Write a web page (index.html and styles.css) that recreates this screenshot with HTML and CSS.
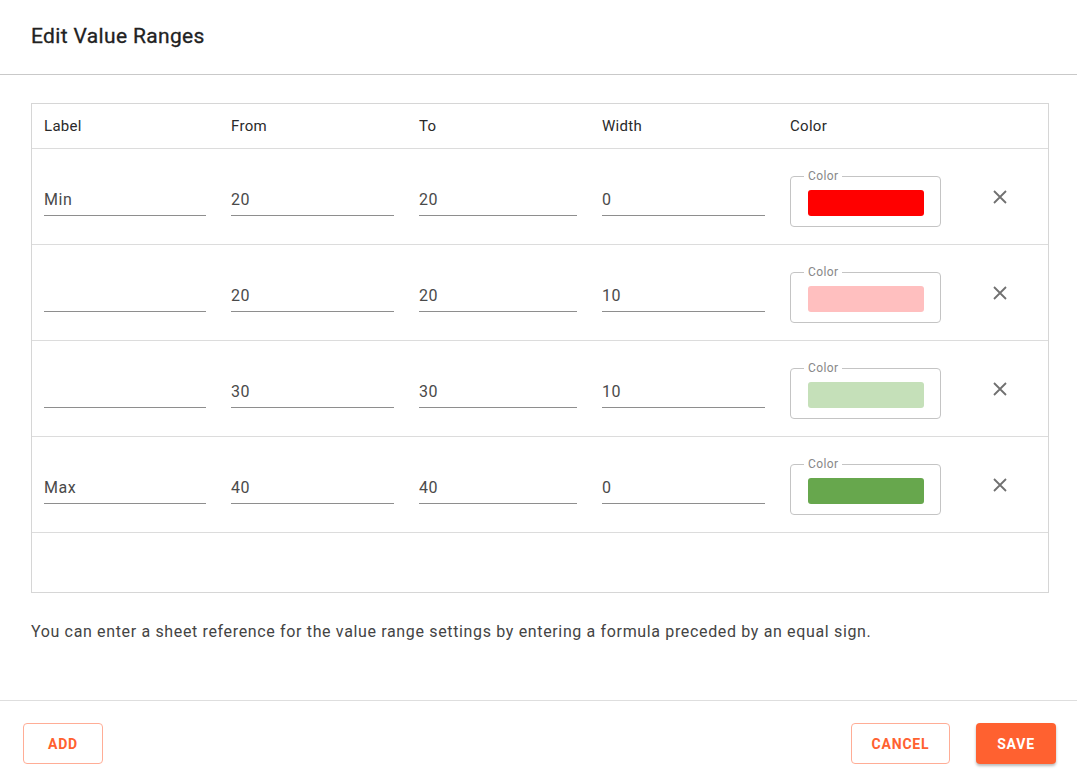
FILE: index.html
```html
<!DOCTYPE html>
<html>
<head>
<meta charset="utf-8">
<link rel="stylesheet" href="styles.css">
</head>
<body>
<div class="dialog">
  <header class="dialog-title">Edit Value Ranges</header>
  <main class="dialog-content">
    <div class="ranges">
      <div class="row head">
        <div class="cell">Label</div>
        <div class="cell">From</div>
        <div class="cell">To</div>
        <div class="cell">Width</div>
        <div class="cell">Color</div>
        <div class="cell"></div>
      </div>
      <div class="row">
        <div class="cell"><div class="input">Min</div></div>
        <div class="cell"><div class="input">20</div></div>
        <div class="cell"><div class="input">20</div></div>
        <div class="cell"><div class="input">0</div></div>
        <div class="cell"><div class="color-field"><span class="legend">Color</span><span class="swatch" style="background:#ff0000"></span></div></div>
        <div class="cell"><svg class="remove" viewBox="0 0 14 14"><path d="M1 1L13 13M13 1L1 13"/></svg></div>
      </div>
      <div class="row">
        <div class="cell"><div class="input"></div></div>
        <div class="cell"><div class="input">20</div></div>
        <div class="cell"><div class="input">20</div></div>
        <div class="cell"><div class="input">10</div></div>
        <div class="cell"><div class="color-field"><span class="legend">Color</span><span class="swatch" style="background:#ffbfbf"></span></div></div>
        <div class="cell"><svg class="remove" viewBox="0 0 14 14"><path d="M1 1L13 13M13 1L1 13"/></svg></div>
      </div>
      <div class="row">
        <div class="cell"><div class="input"></div></div>
        <div class="cell"><div class="input">30</div></div>
        <div class="cell"><div class="input">30</div></div>
        <div class="cell"><div class="input">10</div></div>
        <div class="cell"><div class="color-field"><span class="legend">Color</span><span class="swatch" style="background:#c5e0b9"></span></div></div>
        <div class="cell"><svg class="remove" viewBox="0 0 14 14"><path d="M1 1L13 13M13 1L1 13"/></svg></div>
      </div>
      <div class="row">
        <div class="cell"><div class="input">Max</div></div>
        <div class="cell"><div class="input">40</div></div>
        <div class="cell"><div class="input">40</div></div>
        <div class="cell"><div class="input">0</div></div>
        <div class="cell"><div class="color-field"><span class="legend">Color</span><span class="swatch" style="background:#67a74d"></span></div></div>
        <div class="cell"><svg class="remove" viewBox="0 0 14 14"><path d="M1 1L13 13M13 1L1 13"/></svg></div>
      </div>
      <div class="empty"></div>
    </div>
    <p class="note">You can enter a sheet reference for the value range settings by entering a formula preceded by an equal sign.</p>
  </main>
  <footer class="dialog-actions">
    <button class="btn outline">ADD</button>
    <div class="spacer"></div>
    <button class="btn outline cancel">CANCEL</button>
    <button class="btn filled">SAVE</button>
  </footer>
</div>
</body>
</html>
```
FILE: styles.css
```css
* { box-sizing: border-box; }
html, body { margin: 0; padding: 0; background: #fff; }
body {
  font-family: Roboto, "Liberation Sans", Arial, sans-serif;
  color: #333;
  width: 1077px;
  height: 782px;
  overflow: hidden;
}
.dialog { display: flex; flex-direction: column; height: 782px; }
.dialog-title {
  height: 75px;
  padding: 24px 31px 0;
  font-size: 21px;
  line-height: 24px;
  font-weight: 400;
  letter-spacing: 0.35px;
  color: #222;
  -webkit-text-stroke: 0.3px #222;
  border-bottom: 1px solid #c9c9c9;
}
.dialog-content {
  flex: 1;
  padding: 28px 28px 0 31px;
}
.ranges {
  width: 1018px;
  border: 1px solid #d6d6d6;
}
.row {
  display: grid;
  grid-template-columns: 187px 188px 183px 188px 188px 1fr;
  height: 96px;
  border-bottom: 1px solid #dcdcdc;
  align-items: start;
}
.row.head {
  height: 45px;
  align-items: center;
  font-size: 15px;
  font-weight: 400;
  letter-spacing: 0.3px;
  color: #2a2a2a;
}
.cell { padding: 0 12px; }
.row:not(.head) .cell { padding-top: 35px; }
.row:not(.head) .cell:nth-child(5) { padding-top: 27px; }
.row:not(.head) .cell:nth-child(6) { padding-top: 41px; padding-left: 27px; }
.input {
  height: 32px;
  padding-top: 6px;
  font-size: 16px;
  line-height: 20px;
  letter-spacing: 0.6px;
  color: #4a4a4a;
  border-bottom: 1px solid #8e8e8e;
  margin-right: 1px;
}
.color-field {
  position: relative;
  width: 151px;
  height: 51px;
  border: 1px solid #c4c4c4;
  border-radius: 4px;
  padding: 13px 16px 0 17px;
}
.legend {
  position: absolute;
  top: -9px;
  left: 13px;
  padding: 0 4px;
  background: #fff;
  font-size: 12px;
  line-height: 16px;
  letter-spacing: 0.4px;
  color: #888;
}
.swatch {
  display: block;
  width: 116px;
  height: 26px;
  border-radius: 3px;
}
.remove {
  display: block;
  width: 14px;
  height: 14px;
  stroke: #707070;
  stroke-width: 1.8;
  fill: none;
}
.empty { height: 59px; }
.note {
  margin: 29px 0 0;
  font-size: 16px;
  line-height: 20px;
  letter-spacing: 0.65px;
  color: #444;
}
.dialog-actions {
  height: 82px;
  border-top: 1px solid #dedede;
  display: flex;
  align-items: flex-start;
  padding: 22px 21px 0 23px;
  gap: 26px;
}
.spacer { flex: 1; }
.btn {
  height: 41px;
  min-width: 80px;
  border-radius: 4px;
  font-family: Roboto, "Liberation Sans", Arial, sans-serif;
  font-size: 14px;
  font-weight: 700;
  letter-spacing: 0.8px;
  padding: 0 12px;
  cursor: pointer;
}
.outline {
  background: #fff;
  color: #ff6130;
  border: 1px solid #ffad96;
}
.cancel { width: 99px; }
.filled {
  background: #ff6130;
  color: #fff;
  border: none;
  box-shadow: 0 2px 3px rgba(0,0,0,0.28);
}
```
